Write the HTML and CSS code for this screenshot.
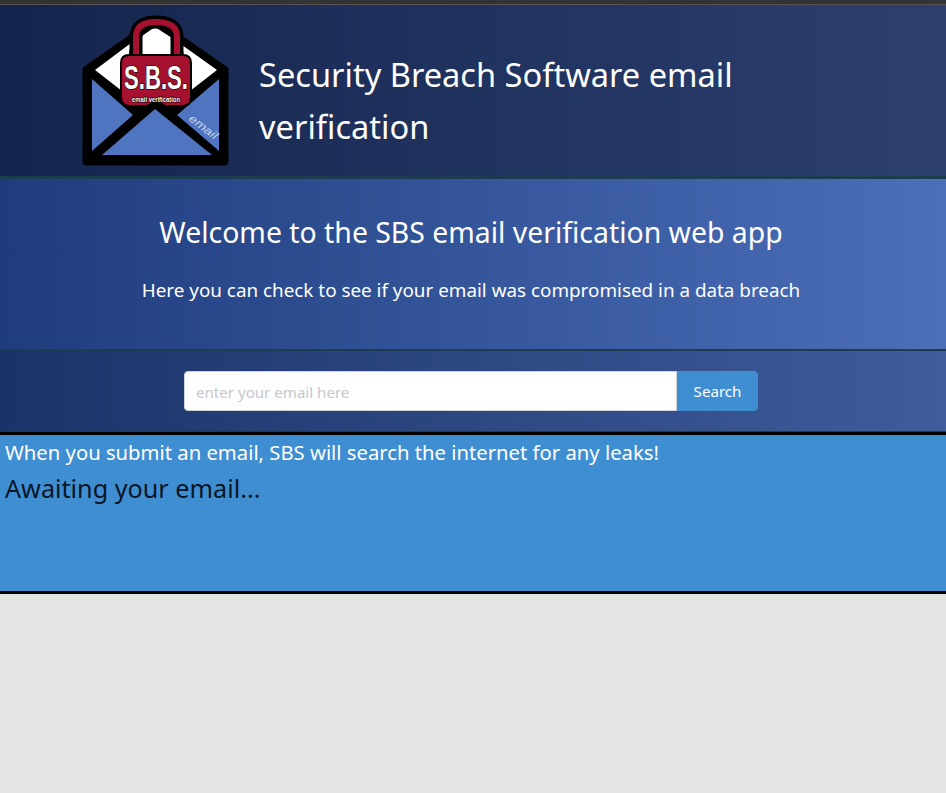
FILE: index.html
```html
<!DOCTYPE html>
<html lang="en">
<head>
<meta charset="utf-8">
<title>SBS email verification</title>
<link rel="stylesheet" href="styles.css">
</head>
<body>
<div class="topbar"></div>
<header class="header">
  <svg class="logo" viewBox="0 0 150 152" width="150" height="152" aria-label="S.B.S. logo">
    <path d="M4 54 L74 5 L145 54 V146 Q145 148 143 148 H6 Q4 148 4 146 Z" fill="#000" stroke="#000" stroke-width="5" stroke-linejoin="round"/>
    <path d="M14 55 L50 28 L41 76 Z M136 55 L101 30 L109 76 Z" fill="#fff"/>
    <path d="M58 23 L74 12 L91 23 V42 H58 Z" fill="#fff"/>
    <path d="M11 64 L52 100 L11 136 Z" fill="#4f74c0"/>
    <path d="M138 64 L138 136 L96 100 Z" fill="#4f74c0"/>
    <path d="M21 140 L74 94 L131 140 Z" fill="#4f74c0"/>
    <path d="M55 44 V22 Q55 7 75 7 Q96 7 96 22 V44" fill="none" stroke="#000" stroke-width="13"/>
    <path d="M55 44 V22 Q55 7 75 7 Q96 7 96 22 V44" fill="none" stroke="#a5112f" stroke-width="6"/>
    <path d="M40 48 Q40 40 48 40 H102 Q110 40 110 48 V82 Q110 91 101 91 H84 L75 85 L66 91 H49 Q40 91 40 82 Z" fill="#a5112f" stroke="#000" stroke-width="2"/>
    <text class="logo-sbs" x="43" y="74" textLength="64" lengthAdjust="spacingAndGlyphs">S.B.S.</text>
    <text class="logo-sub" x="51" y="87" textLength="48" lengthAdjust="spacingAndGlyphs">email verification</text>
    <text class="logo-mail" transform="translate(107 105) rotate(37)" textLength="33" lengthAdjust="spacingAndGlyphs">email</text>
  </svg>
  <h1 class="title">Security Breach Software email verification</h1>
</header>
<section class="welcome">
  <h2 class="welcome-title">Welcome to the SBS email verification web app</h2>
  <p class="welcome-text">Here you can check to see if your email was compromised in a data breach</p>
</section>
<section class="search">
  <form class="search-form">
    <input class="search-input" type="text" placeholder="enter your email here">
    <button class="search-button" type="button">Search</button>
  </form>
</section>
<section class="result">
  <p class="result-note">When you submit an email, SBS will search the internet for any leaks!</p>
  <p class="result-status">Awaiting your email...</p>
</section>
</body>
</html>
```
FILE: styles.css
```css
* { box-sizing: border-box; }
html, body { margin: 0; padding: 0; }
body {
  background: #e4e4e4;
  font-family: "Noto Sans", "Open Sans", "Liberation Sans", sans-serif;
  color: #fff;
}
.topbar {
  height: 5px;
  background: #333;
  border-bottom: 1px solid #555;
}
.header {
  height: 174px;
  display: flex;
  align-items: center;
  padding-left: 81px;
  background: linear-gradient(90deg, #14254d, #2c3f6f);
  border-bottom: 3px solid #1c3d4f;
}
.logo { flex: none; display: block; }
.logo-sbs { font: 700 34px "Liberation Sans", sans-serif; fill: #fff; stroke: #000; stroke-width: 1.2px; paint-order: stroke; }
.logo-sub { font: 700 6.500px "Liberation Sans", sans-serif; fill: #fff; stroke: #000; stroke-width: 1px; paint-order: stroke; }
.logo-mail { font: italic 11px "Liberation Sans", sans-serif; fill: #c9d6ee; }
.title {
  margin: 21px 0 0 28px;
  width: 500px;
  font-size: 32.6px;
  font-weight: 400;
  line-height: 52px;
}
.welcome {
  height: 172px;
  padding: 34px 4px 0 0;
  text-align: center;
  background: linear-gradient(90deg, #1f3c7d, #4b6fb9);
  border-bottom: 2px solid #1c3d4f;
}
.welcome-title {
  margin: 0;
  font-size: 28.4px;
  font-weight: 400;
  line-height: 39px;
}
.welcome-text {
  margin: 25px 0 0;
  font-size: 18.85px;
  line-height: 27px;
}
.search {
  height: 84px;
  padding: 20px 0 0 184px;
  background: linear-gradient(90deg, #1c3369, #3f5c9b);
  border-bottom: 3px solid #000;
  box-shadow: inset 0 -1px 0 #1c3d4f;
}
.search-form { display: flex; width: 574px; height: 40px; }
.search-input {
  flex: 1;
  min-width: 0;
  border: 1px solid #ced4da;
  border-radius: 4px 0 0 4px;
  padding: 2px 11px 0;
  font: 15.100px "Noto Sans", "Open Sans", sans-serif;
  outline: none;
  background: #fff;
}
.search-input::placeholder { color: #c3c8ce; opacity: 1; }
.search-button {
  flex: none;
  width: 81px;
  border: 1px solid #3f8ed1;
  border-radius: 0 4px 4px 0;
  background: #3f8ed1;
  color: #fff;
  font: 15.100px "Noto Sans", "Open Sans", sans-serif;
  padding: 0;
}
.result {
  height: 159px;
  padding: 2px 5px 0;
  background: #3f8ed1;
  border-bottom: 3px solid #000;
}
.result-note {
  margin: 0;
  font-size: 20.25px;
  line-height: 30px;
}
.result-status {
  margin: 3px 0 0;
  font-size: 25.2px;
  line-height: 36px;
  color: #0b1626;
}
```
